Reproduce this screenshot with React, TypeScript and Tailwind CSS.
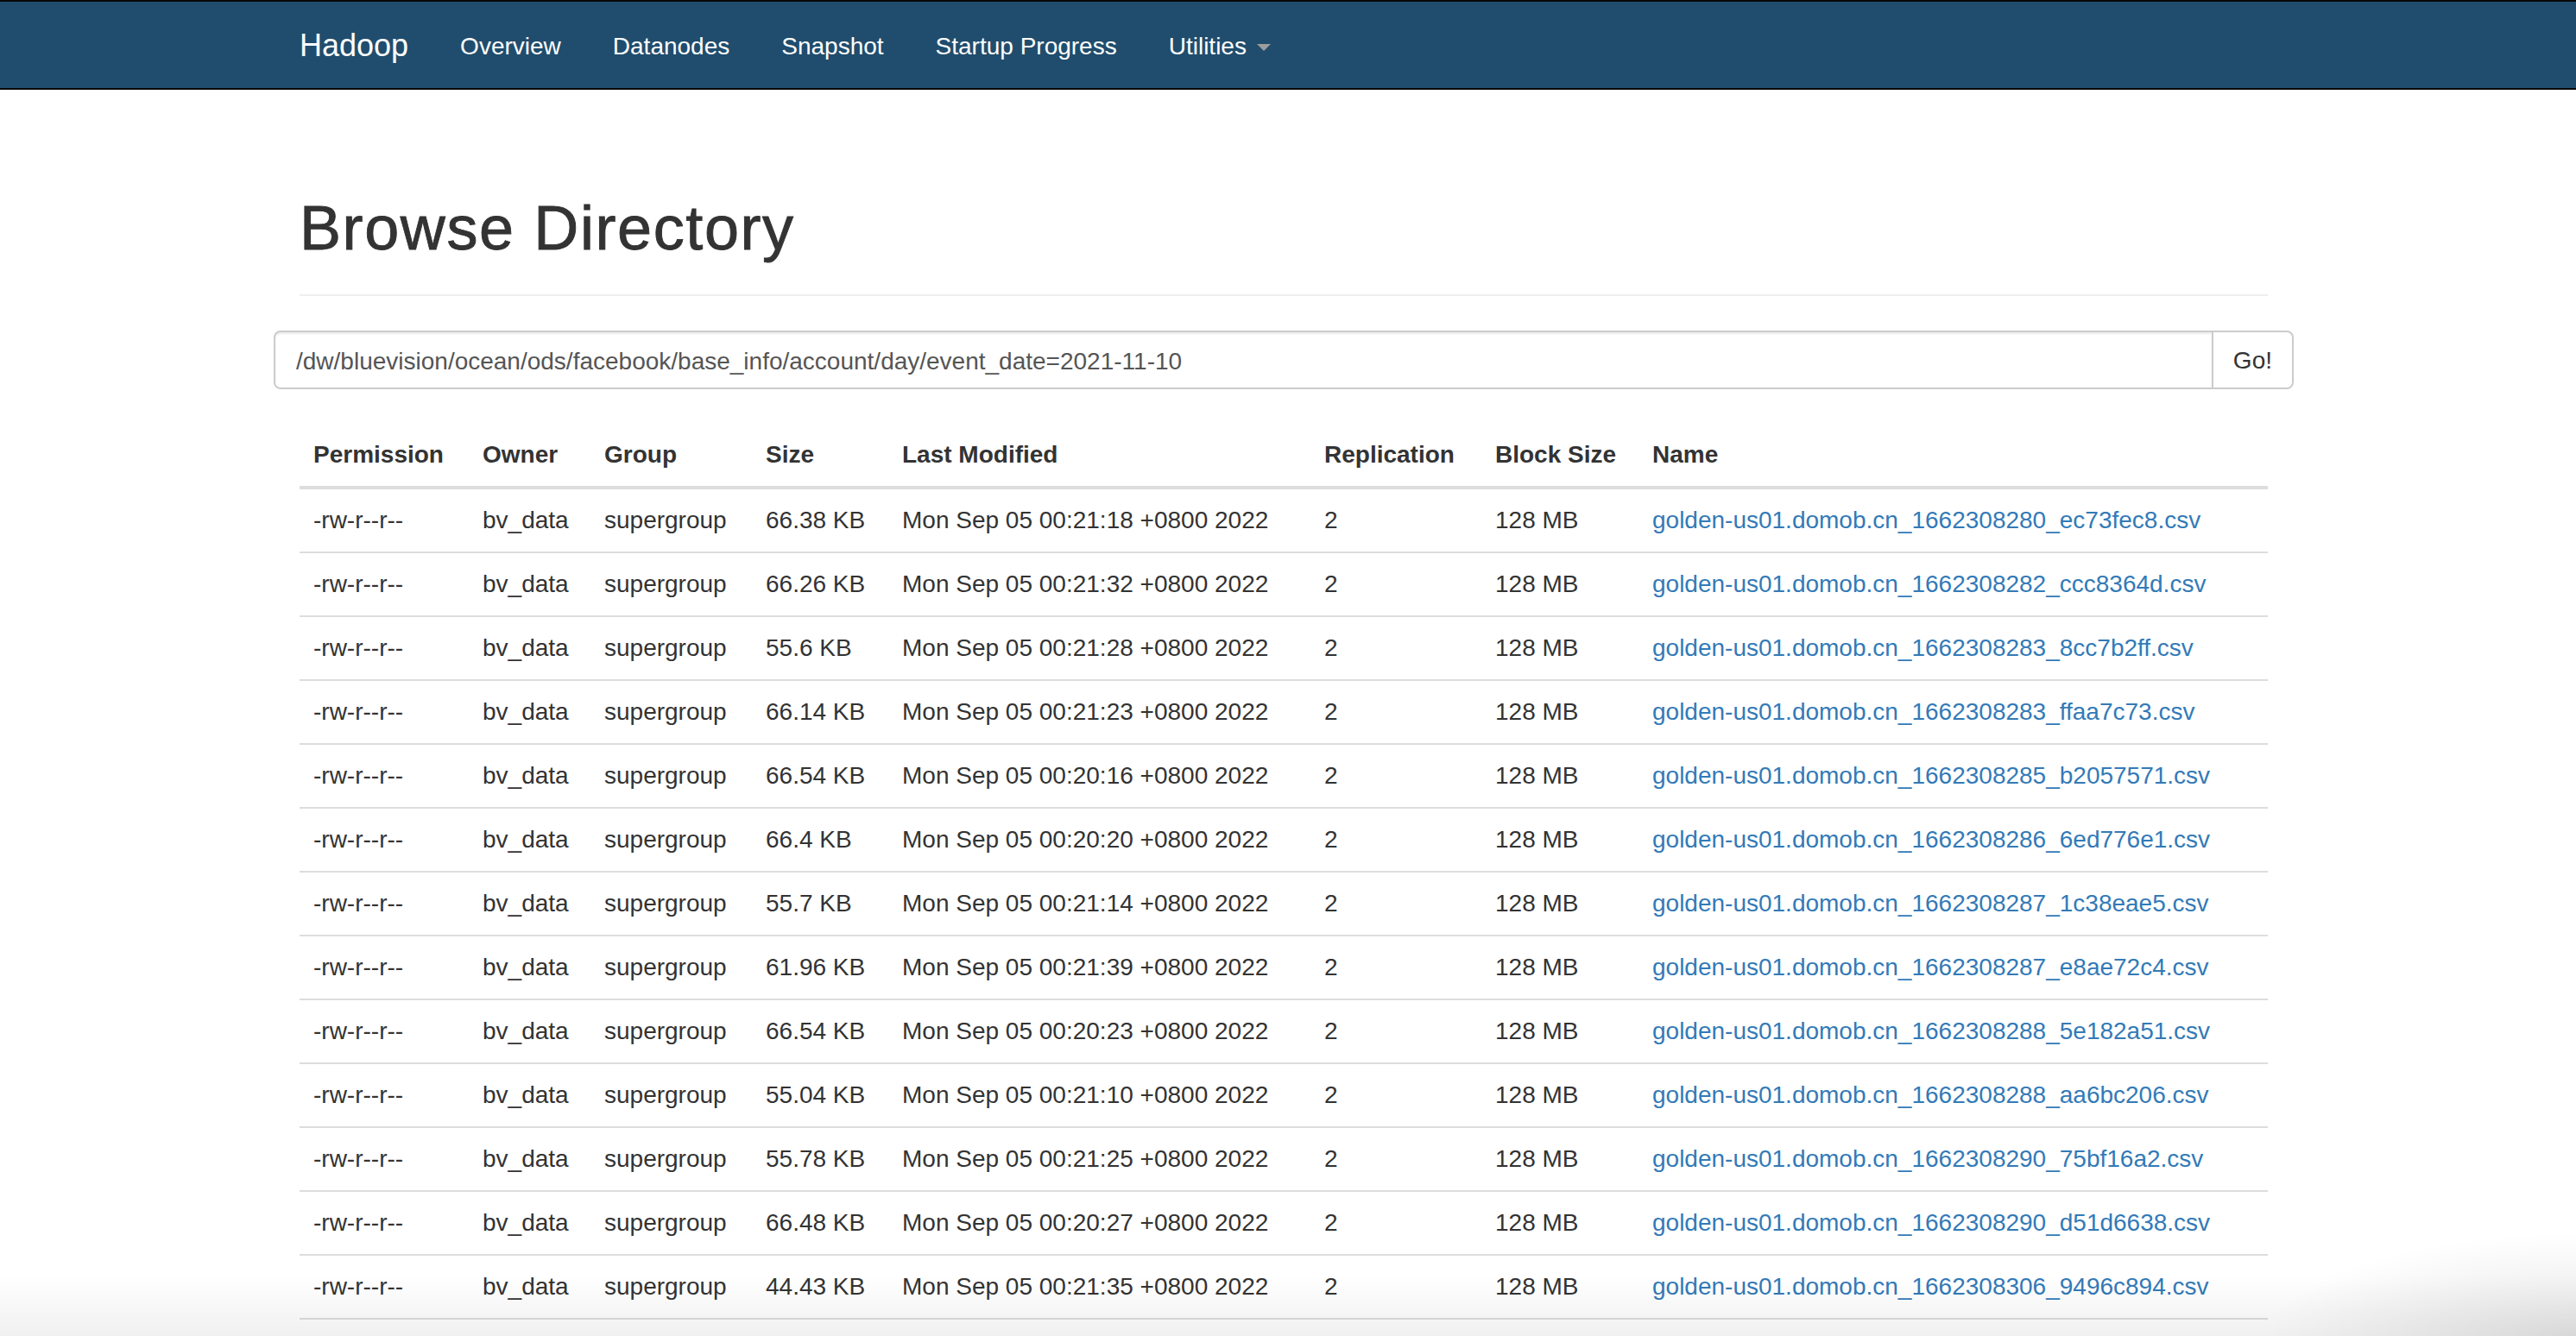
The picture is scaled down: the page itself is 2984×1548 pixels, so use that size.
const files = [
  { size: "66.38 KB", time: "00:21:18", name: "1662308280_ec73fec8" },
  { size: "66.26 KB", time: "00:21:32", name: "1662308282_ccc8364d" },
  { size: "55.6 KB", time: "00:21:28", name: "1662308283_8cc7b2ff" },
  { size: "66.14 KB", time: "00:21:23", name: "1662308283_ffaa7c73" },
  { size: "66.54 KB", time: "00:20:16", name: "1662308285_b2057571" },
  { size: "66.4 KB", time: "00:20:20", name: "1662308286_6ed776e1" },
  { size: "55.7 KB", time: "00:21:14", name: "1662308287_1c38eae5" },
  { size: "61.96 KB", time: "00:21:39", name: "1662308287_e8ae72c4" },
  { size: "66.54 KB", time: "00:20:23", name: "1662308288_5e182a51" },
  { size: "55.04 KB", time: "00:21:10", name: "1662308288_aa6bc206" },
  { size: "55.78 KB", time: "00:21:25", name: "1662308290_75bf16a2" },
  { size: "66.48 KB", time: "00:20:27", name: "1662308290_d51d6638" },
  { size: "44.43 KB", time: "00:21:35", name: "1662308306_9496c894" },
];

const navLinks = ["Overview", "Datanodes", "Snapshot", "Startup Progress"];

const th = "border-b-4 border-[#ddd] p-[16px] text-left align-bottom font-bold";
const td = "border-b-2 border-[#ddd] p-[16px] align-top";

export default function App() {
  return (
    <div className="relative h-[1548px] overflow-hidden bg-white font-['Liberation_Sans',Arial,sans-serif] text-[28px] leading-[40px] text-[#333]">
      <nav className="h-[104px] border-y-2 border-[#080808] bg-[#204d6d] pr-[10px]">
        <div className="mx-auto flex w-[2340px] px-[30px]">
          <a className="-ml-[30px] px-[30px] pt-[31px] pb-[29px] text-[36px] leading-[40px] text-white">Hadoop</a>
          <ul className="flex">
            {navLinks.map((l) => (
              <li key={l}>
                <a className="block px-[30px] pt-[32px] pb-[28px] text-white">{l}</a>
              </li>
            ))}
            <li>
              <a className="flex items-center px-[30px] pt-[32px] pb-[28px] text-white">
                Utilities
                <span className="ml-[12px] mt-[2px] inline-block h-0 w-0 border-x-[8px] border-t-[8px] border-x-transparent border-t-[#9d9d9d]" />
              </a>
            </li>
          </ul>
        </div>
      </nav>

      <div className="pr-[10px]">
        <div className="mx-auto w-[2340px] px-[30px]">
          <div className="mt-[120px] mb-[40px] border-b-2 border-[#eee] pt-[1px] pb-[18px]">
            <h1 className="mb-[19px] text-[72px] leading-[1.1] tracking-[1.6px] [-webkit-text-stroke:0.9px_#333]">
              Browse Directory
            </h1>
          </div>

          <div className="-mx-[30px] flex">
            <div className="h-[68px] flex-1 rounded-l-[8px] border-2 border-[#ccc] px-[24px] pt-[14px] pb-[10px] text-[#555] shadow-[inset_0_2px_2px_rgba(0,0,0,0.075)]">
              /dw/bluevision/ocean/ods/facebook/base_info/account/day/event_date=2021-11-10
            </div>
            <button className="-ml-[2px] h-[68px] rounded-r-[8px] border-2 border-[#ccc] bg-white px-[23px] pt-[2px] text-[#333]">
              Go!
            </button>
          </div>

          <table className="mt-[40px] w-full table-fixed border-separate border-spacing-0">
            <thead>
              <tr>
                <th className={`${th} w-[196px]`}>Permission</th>
                <th className={`${th} w-[141px]`}>Owner</th>
                <th className={`${th} w-[187px]`}>Group</th>
                <th className={`${th} w-[158px]`}>Size</th>
                <th className={`${th} w-[489px]`}>Last Modified</th>
                <th className={`${th} w-[198px]`}>Replication</th>
                <th className={`${th} w-[182px]`}>Block Size</th>
                <th className={`${th} w-[729px]`}>Name</th>
              </tr>
            </thead>
            <tbody>
              {files.map((f) => (
                <tr key={f.name}>
                  <td className={td}>-rw-r--r--</td>
                  <td className={td}>bv_data</td>
                  <td className={td}>supergroup</td>
                  <td className={td}>{f.size}</td>
                  <td className={td}>Mon Sep 05 {f.time} +0800 2022</td>
                  <td className={td}>2</td>
                  <td className={td}>128 MB</td>
                  <td className={td}>
                    <a className="text-[#337ab7]">golden-us01.domob.cn_{f.name}.csv</a>
                  </td>
                </tr>
              ))}
            </tbody>
          </table>
        </div>
      </div>

      <div className="pointer-events-none absolute inset-x-0 bottom-0 h-[70px] bg-gradient-to-b from-transparent to-[rgba(0,0,0,0.06)]" />
      <div className="pointer-events-none absolute bottom-0 right-0 h-[120px] w-[360px] bg-[radial-gradient(ellipse_at_bottom_right,rgba(0,0,0,0.1),transparent_70%)]" />
    </div>
  );
}
